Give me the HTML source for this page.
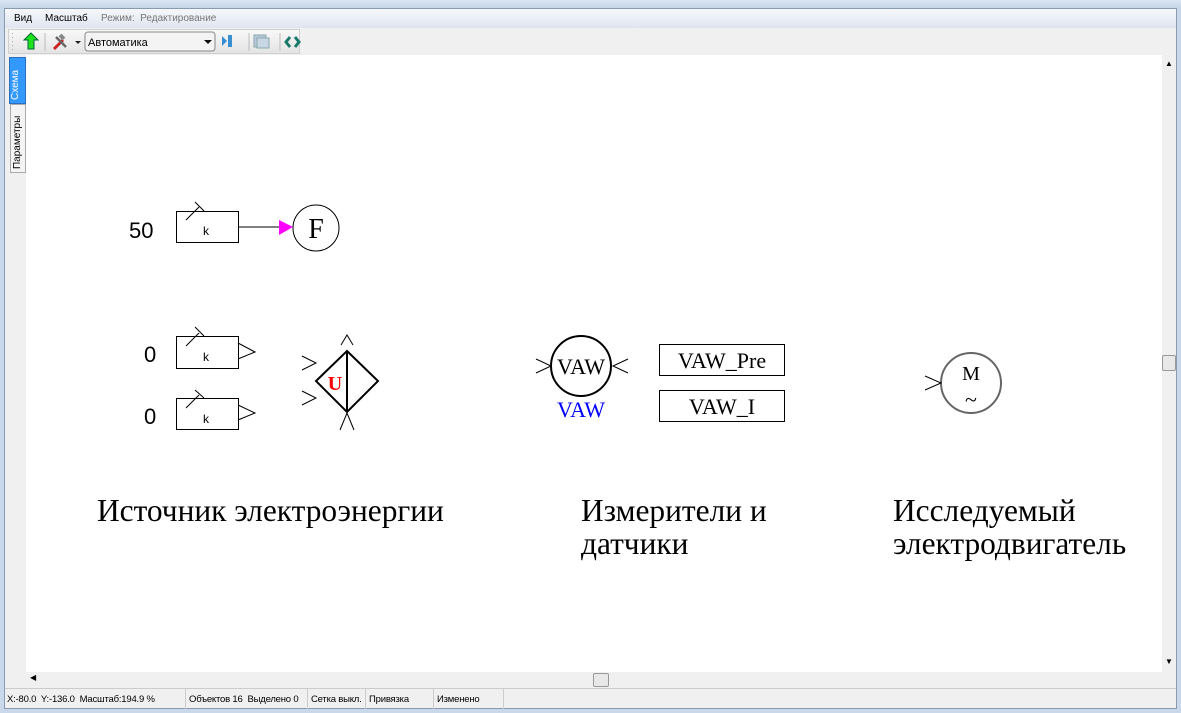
<!DOCTYPE html>
<html><head><meta charset="utf-8"><style>
*{margin:0;padding:0;box-sizing:border-box}
body{width:1181px;height:713px;overflow:hidden;background:#c9d8ea;font-family:"Liberation Sans",sans-serif;font-size:11px;position:relative}
.abs{position:absolute}
</style></head><body>
<div class="abs" style="left:0;top:0;width:1181px;height:8px;background:linear-gradient(#dbe6f3,#c5d5e8)"></div>
<div class="abs" style="left:4px;top:8px;width:1173px;height:701px;background:#f0f0f0;border:1px solid #8a9bb0"></div>
<div class="abs" style="left:5px;top:9px;width:1171px;height:19px;background:linear-gradient(#f5f7fb,#dfe5f0)"></div>
<div class="abs" style="left:14px;top:13px;font-size:10px;color:#000">Вид</div>
<div class="abs" style="left:45px;top:13px;font-size:10px;color:#000">Масштаб</div>
<div class="abs" style="left:101px;top:13px;font-size:10px;color:#777">Режим:&nbsp; Редактирование</div>
<div class="abs" style="left:8px;top:29px;width:292px;height:25px;background:linear-gradient(#f8f8f8,#e4e4e4);border:1px solid #d0d0d0"></div>
<svg class="abs" style="left:8px;top:29px" width="300" height="26">
<g fill="#aaa"><rect x="4" y="4" width="1" height="1"/><rect x="4" y="8" width="1" height="1"/><rect x="4" y="12" width="1" height="1"/><rect x="4" y="16" width="1" height="1"/><rect x="4" y="20" width="1" height="1"/></g>
<path d="M23 4 L30 11 L26 11 L26 20 L20 20 L20 11 L16 11Z" fill="#1ee21e" stroke="#063" stroke-width="1"/>
<line x1="37" y1="4" x2="37" y2="22" stroke="#bbb"/>
<path d="M46 20 L55 11" stroke="#c22" stroke-width="3"/><path d="M48 8 L58 18" stroke="#666" stroke-width="2.5"/><path d="M52 6 L56 10" stroke="#888" stroke-width="4"/>
<path d="M67 12 L73 12 L70 15Z" fill="#222"/>
<rect x="77" y="3" width="130" height="19" rx="3" fill="#f4f4f4" stroke="#888"/>
<text x="80" y="17" font-size="11" font-family="Liberation Sans">Автоматика</text>
<path d="M196 11 L204 11 L200 15Z" fill="#111"/>
<path d="M214 7 L219 12 L214 17Z" fill="#3a8fd0"/><rect x="220" y="6" width="4" height="12" fill="#3a8fd0"/>
<line x1="241" y1="4" x2="241" y2="22" stroke="#bbb"/>
<rect x="246" y="6" width="12" height="12" fill="#b8c8dc" stroke="#8aa"/><rect x="249" y="9" width="12" height="10" fill="#c8d6e6" stroke="#8aa"/>
<line x1="272" y1="4" x2="272" y2="22" stroke="#bbb"/>
<path d="M282 8 L278 13 L282 18 M287 8 L291 13 L287 18" stroke="#1a7a6a" stroke-width="3" fill="none"/>
</svg>
<div class="abs" style="left:9px;top:57px;width:17px;height:47px;background:#3399ff;border:1px solid #2a6fc0"></div>
<div class="abs" style="left:10px;top:100px;color:#fff;font-size:10px;transform:rotate(-90deg);transform-origin:0 0;white-space:nowrap">Схема</div>
<div class="abs" style="left:10px;top:104px;width:16px;height:69px;background:#f4f4f4;border:1px solid #aaa"></div>
<div class="abs" style="left:12px;top:169px;color:#000;font-size:10px;transform:rotate(-90deg);transform-origin:0 0;white-space:nowrap">Параметры</div>
<div class="abs" style="left:26px;top:55px;width:1136px;height:617px;background:#fff"></div>
<div class="abs" style="left:1162px;top:55px;width:14px;height:617px;background:#f0f0f0"></div>
<div class="abs" style="left:1165px;top:59px;font-size:8px">▲</div>
<div class="abs" style="left:1165px;top:657px;font-size:8px">▼</div>
<div class="abs" style="left:1162px;top:355px;width:14px;height:16px;background:#e8e8e8;border:1px solid #999;border-radius:2px"></div>
<div class="abs" style="left:26px;top:672px;width:1136px;height:15px;background:#f0f0f0"></div>
<div class="abs" style="left:30px;top:673px;font-size:8px">◀</div>
<div class="abs" style="left:593px;top:673px;width:16px;height:14px;background:#e8e8e8;border:1px solid #999;border-radius:2px"></div>
<div class="abs" style="left:5px;top:688px;width:1171px;height:20px;background:#f0f0f0;border-top:1px solid #ccc;font-size:9.5px;letter-spacing:-0.2px;white-space:nowrap">
<span class="abs" style="left:2px;top:5px">X:-80.0&nbsp; Y:-136.0&nbsp; Масштаб:194.9 %</span>
<span class="abs" style="left:180px;top:0;height:20px;border-left:1px solid #ccc"></span>
<span class="abs" style="left:184px;top:5px">Объектов 16&nbsp; Выделено 0</span>
<span class="abs" style="left:302px;top:0;height:20px;border-left:1px solid #ccc"></span>
<span class="abs" style="left:306px;top:5px">Сетка выкл.</span>
<span class="abs" style="left:360px;top:0;height:20px;border-left:1px solid #ccc"></span>
<span class="abs" style="left:364px;top:5px">Привязка</span>
<span class="abs" style="left:428px;top:0;height:20px;border-left:1px solid #ccc"></span>
<span class="abs" style="left:432px;top:5px">Изменено</span>
<span class="abs" style="left:498px;top:0;height:20px;border-left:1px solid #ccc"></span>
</div>
<svg class="abs" style="left:0;top:0" width="1181" height="713" font-family="Liberation Sans">
<g stroke="#000" fill="none" stroke-width="1">
<rect x="176.5" y="211.5" width="62" height="31"/><path d="M186 220 L199 207 M195 202 L204 211"/>
<line x1="238" y1="227" x2="279" y2="227"/>
<rect x="176.5" y="336.5" width="62" height="32"/><path d="M186 346 L199 333 M195 327 L204 336"/>
<path d="M238 343 L255 352 L238 359"/>
<rect x="176.5" y="398.5" width="62" height="31"/><path d="M186 408 L199 395 M195 390 L204 398"/>
<path d="M238 405 L255 413 L238 420"/>
<circle cx="316" cy="228" r="23"/>
<path d="M302 356 L316 363 L302 370 M302 391 L316 398 L302 405"/>
<path d="M347 351 L378 381 L347 412 L316 381Z" stroke-width="2"/><line x1="347" y1="351" x2="347" y2="412" stroke-width="2"/>
<path d="M341 345 L347 335 L353 345 M340 430 L347 413 L354 430"/>
<circle cx="581" cy="366" r="30" stroke-width="2"/>
<path d="M536 359 L551 366 L536 373 M628 359 L613 366 L628 373"/>
<rect x="659.5" y="344.5" width="125" height="31"/>
<rect x="659.5" y="390.5" width="125" height="31"/>
<circle cx="971" cy="383" r="30" stroke="#666" stroke-width="2"/>
<path d="M925 376 L941 383 L925 390"/>
</g>
<path d="M279 220 L293 227 L279 235Z" fill="#f0f"/>
<text x="203" y="235" font-size="12">k</text><text x="203" y="361" font-size="12">k</text><text x="203" y="423" font-size="12">k</text>
<text x="129" y="238" font-size="22">50</text>
<text x="144" y="362" font-size="22">0</text><text x="144" y="424" font-size="22">0</text>
<g font-family="Liberation Serif">
<text x="316" y="238" font-size="28" text-anchor="middle">F</text>
<text x="335" y="390" font-size="20" font-weight="bold" fill="#f00" text-anchor="middle">U</text>
<text x="581" y="374" font-size="22" text-anchor="middle">VAW</text>
<text x="581" y="417" font-size="22" text-anchor="middle" fill="#00f">VAW</text>
<text x="722" y="368" font-size="22" text-anchor="middle">VAW_Pre</text>
<text x="722" y="414" font-size="22" text-anchor="middle">VAW_I</text>
<text x="971" y="380" font-size="20" text-anchor="middle">M</text>
<text x="971" y="407" font-size="22" text-anchor="middle">~</text>
<text x="97" y="521" font-size="31.4">Источник электроэнергии</text>
<text x="581" y="521" font-size="31.4">Измерители и</text>
<text x="581" y="554" font-size="31.4">датчики</text>
<text x="893" y="521" font-size="31.4">Исследуемый</text>
<text x="893" y="554" font-size="31.4">электродвигатель</text>
</g>
</svg>
</body></html>
